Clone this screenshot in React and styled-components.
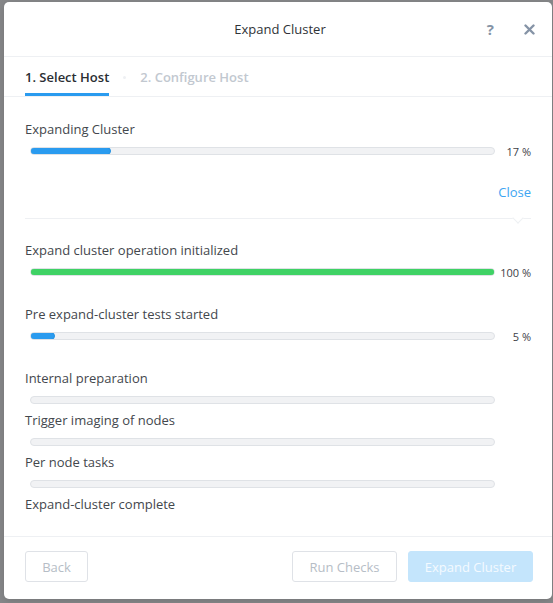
import React from 'react';
import styled, { createGlobalStyle } from 'styled-components';

const GlobalStyle = createGlobalStyle`
  html, body {
    margin: 0;
    padding: 0;
    background: #87888a;
  }
  body {
    font-family: "Open Sans", Lato, "Liberation Sans", sans-serif;
    -webkit-font-smoothing: antialiased;
  }
`;

const Backdrop = styled.div`
  width: 553px;
  height: 603px;
  box-sizing: border-box;
  padding: 2px 1px 4px 4px;
  background: #87888a;
  display: flex;
`;

const Modal = styled.div`
  width: 548px;
  height: 597px;
  background: #fff;
  border-radius: 5px;
  display: flex;
  flex-direction: column;
  box-shadow: 0 2px 8px rgba(0, 0, 0, 0.15);
`;

const Header = styled.div`
  height: 54px;
  display: grid;
  grid-template-columns: 1fr auto 1fr;
  align-items: center;
  padding: 0 17px 0 21px;
  border-bottom: 1px solid #eef0f3;
`;

const Title = styled.div`
  grid-column: 2;
  font-size: 13px;
  color: #2f3338;
`;

const HeaderActions = styled.div`
  grid-column: 3;
  justify-self: end;
  display: flex;
  align-items: center;
  gap: 30px;
`;

const HelpIcon = styled.span`
  font-size: 15px;
  font-weight: 700;
  color: #8593a6;
  line-height: 1;
`;

const CloseIcon = styled.svg`
  width: 11px;
  height: 11px;
`;

const Tabs = styled.div`
  height: 39px;
  display: flex;
  align-items: stretch;
  gap: 14px;
  padding: 0 21px;
  border-bottom: 1px solid #eef0f3;
`;

const Tab = styled.div`
  display: flex;
  align-items: center;
  font-size: 13px;
  font-weight: 600;
  color: ${(p) => (p.$active ? '#2a2e33' : '#c2c8d0')};
  box-shadow: ${(p) => (p.$active ? 'inset 0 -3px 0 #2a9bef' : 'none')};
  padding-top: 1px;
`;

const TabDot = styled.span`
  align-self: center;
  width: 3px;
  height: 3px;
  border-radius: 50%;
  background: #eef0f3;
  margin-top: 1px;
`;

const Body = styled.div`
  flex: 1;
  padding: 23px 21px 0;
  display: flex;
  flex-direction: column;
`;

const Step = styled.div`
  margin-bottom: ${(p) => (p.$tall ? '25px' : '3px')};
`;

const Label = styled.div`
  font-size: 13px;
  line-height: 18px;
  color: #43474d;
  margin-bottom: 5px;
`;

const BarRow = styled.div`
  height: 16px;
  display: flex;
  align-items: center;
  padding-left: 5px;
`;

const Track = styled.div`
  flex: 1;
  height: 8px;
  box-sizing: border-box;
  border-radius: 5px;
  background: #f1f2f4;
  border: 1px solid #dfe2e6;
  overflow: hidden;
`;

const Fill = styled.div`
  height: 8px;
  margin: -1px;
  border-radius: 5px;
  box-sizing: border-box;
  background: ${(p) => (p.$done ? '#3fd265' : '#2a9bef')};
  border: 1px solid ${(p) => (p.$done ? '#35c35a' : '#2390e0')};
`;

const Percent = styled.div`
  width: 36px;
  text-align: right;
  font-size: 11px;
  color: #3d4147;
`;

const CloseRow = styled.div`
  display: flex;
  justify-content: flex-end;
  margin-top: 24px;
`;

const CloseLink = styled.span`
  font-size: 13px;
  line-height: 18px;
  color: #3ea5f2;
`;

const Divider = styled.div`
  height: 1px;
  background: #eef0f3;
  margin: 17px 0 22px;
  position: relative;

  &::after {
    content: '';
    position: absolute;
    right: 9px;
    top: -4px;
    width: 7px;
    height: 7px;
    background: #fff;
    border-right: 1px solid #eef0f3;
    border-bottom: 1px solid #eef0f3;
    transform: rotate(45deg);
  }
`;

const Footer = styled.div`
  height: 63px;
  border-top: 1px solid #eef0f3;
  display: flex;
  align-items: flex-start;
  padding: 14px 19px 0 21px;
  box-sizing: border-box;
  gap: 11px;
`;

const Button = styled.button`
  width: ${(p) => p.$w}px;
  height: 31px;
  padding: 0;
  border-radius: 3px;
  font-family: inherit;
  font-size: 13px;
  border: 1px solid ${(p) => (p.$primary ? '#c4e5fc' : '#dfe2e7')};
  background: ${(p) => (p.$primary ? '#c4e5fc' : '#fff')};
  color: ${(p) => (p.$primary ? '#f4faff' : '#b6bdc6')};
  margin-left: ${(p) => (p.$push ? 'auto' : '0')};
`;

const steps = [
  { label: 'Expand cluster operation initialized', value: 100 },
  { label: 'Pre expand-cluster tests started', value: 5 },
  { label: 'Internal preparation' },
  { label: 'Trigger imaging of nodes' },
  { label: 'Per node tasks' },
];

function ProgressBar({ value }) {
  return (
    <BarRow>
      <Track>
        {value != null && <Fill $done={value === 100} style={{ width: `calc(${value}% + 2px)` }} />}
      </Track>
      <Percent>{value != null ? `${value} %` : ''}</Percent>
    </BarRow>
  );
}

export default function App() {
  return (
    <>
      <GlobalStyle />
      <Backdrop>
        <Modal>
          <Header>
            <Title>Expand Cluster</Title>
            <HeaderActions>
              <HelpIcon>?</HelpIcon>
              <CloseIcon viewBox="0 0 11 11">
                <path d="M1.5 1.5 L9.5 9.5 M9.5 1.5 L1.5 9.5" stroke="#8593a6" strokeWidth="2.4" strokeLinecap="round" />
              </CloseIcon>
            </HeaderActions>
          </Header>
          <Tabs>
            <Tab $active>1. Select Host</Tab>
            <TabDot />
            <Tab>2. Configure Host</Tab>
          </Tabs>
          <Body>
            <Label>Expanding Cluster</Label>
            <ProgressBar value={17} />
            <CloseRow>
              <CloseLink>Close</CloseLink>
            </CloseRow>
            <Divider />
            {steps.map((s) => (
              <Step key={s.label} $tall={s.value != null}>
                <Label>{s.label}</Label>
                <ProgressBar value={s.value} />
              </Step>
            ))}
            <Label>Expand-cluster complete</Label>
          </Body>
          <Footer>
            <Button $w={63}>Back</Button>
            <Button $w={105} $push>Run Checks</Button>
            <Button $w={125} $primary>Expand Cluster</Button>
          </Footer>
        </Modal>
      </Backdrop>
    </>
  );
}
